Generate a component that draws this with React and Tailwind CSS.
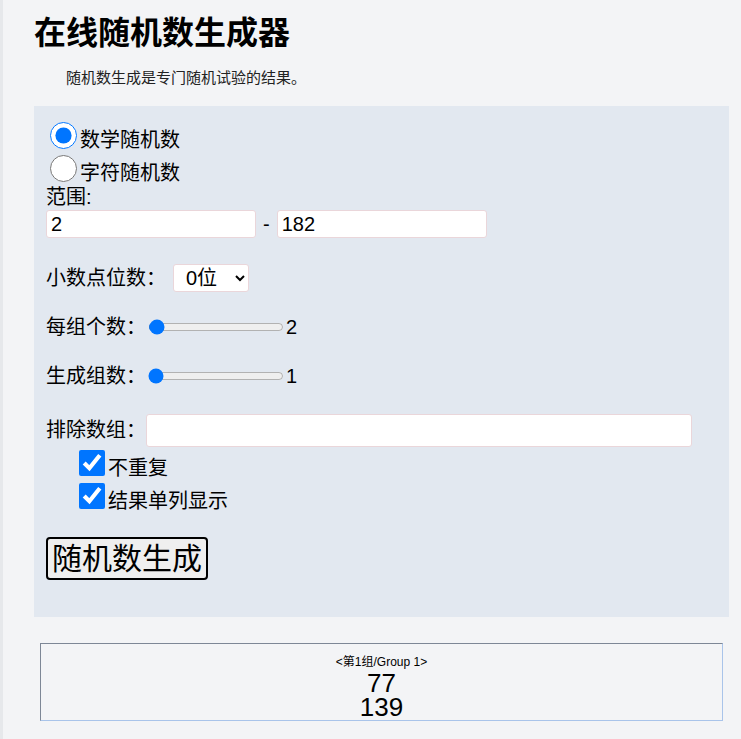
import { useState } from "react";

/* ================= COMPONENT ================= */

export default function App() {
  const [mode, setMode] = useState("math");
  const [min, setMin] = useState("2");
  const [max, setMax] = useState("182");
  const [perGroup, setPerGroup] = useState(2);
  const [groups, setGroups] = useState(1);
  const [noRepeat, setNoRepeat] = useState(true);
  const [singleCol, setSingleCol] = useState(true);

  const font = { fontFamily: '"Liberation Sans", "Noto Sans CJK SC", sans-serif' };

  return (
    <div
      className="min-h-[739px] bg-[#f3f4f6] border-l-[3px] border-[#e6e8eb] pl-[31px] pr-[12px] text-black"
      style={font}
    >
      {/* ================= HEADER ================= */}
      <h1 className="text-[32px] font-bold leading-[38px] pt-[14px]">在线随机数生成器</h1>
      <p className="text-[15px] leading-[20px] pl-[32px] mt-[16px] text-[#222]">
        随机数生成是专门随机试验的结果。
      </p>

      {/* ================= FORM PANEL ================= */}
      <div className="mt-[18px] bg-[#e2e8f0] w-[695px] pl-[12px] pt-[13px] pb-[37px] text-[20px] leading-[24px]">
        <label className="flex items-end h-[33px]">
          <input
            type="radio"
            name="mode"
            checked={mode === "math"}
            onChange={() => setMode("math")}
            className="w-[27px] h-[27px] ml-[4px] mr-[3px] mb-[3px] accent-[#0075ff]"
          />
          <span>数学随机数</span>
        </label>
        <label className="flex items-end h-[33px]">
          <input
            type="radio"
            name="mode"
            checked={mode === "char"}
            onChange={() => setMode("char")}
            className="w-[27px] h-[27px] ml-[4px] mr-[3px] mb-[3px] accent-[#0075ff]"
          />
          <span>字符随机数</span>
        </label>
        <div className="leading-[24px]">范围:</div>
        <div className="flex items-center h-[30px]">
          <input
            value={min}
            onChange={(e) => setMin(e.target.value)}
            className="w-[210px] h-[28px] bg-white border border-[#ead6da] rounded-[3px] px-[4px] text-[20px]"
          />
          <span className="mx-[7px]">-</span>
          <input
            value={max}
            onChange={(e) => setMax(e.target.value)}
            className="w-[210px] h-[28px] bg-white border border-[#ead6da] rounded-[3px] px-[4px] text-[20px]"
          />
        </div>

        <div className="flex items-center h-[30px] mt-[24px]">
          <span>小数点位数：</span>
          <select className="ml-[7px] w-[76px] h-[28px] bg-white border border-[#ead6da] rounded-[3px] pl-[8px] text-[20px]">
            <option>0位</option>
            <option>1位</option>
            <option>2位</option>
          </select>
        </div>

        <div className="flex items-center h-[30px] mt-[19px]">
          <span>每组个数：</span>
          <input
            type="range"
            min="1"
            max="100"
            value={perGroup}
            onChange={(e) => setPerGroup(Number(e.target.value))}
            className="w-[136px] ml-[2px] accent-[#0075ff]"
          />
          <span className="ml-[2px]">{perGroup}</span>
        </div>

        <div className="flex items-center h-[30px] mt-[19px]">
          <span>生成组数：</span>
          <input
            type="range"
            min="1"
            max="100"
            value={groups}
            onChange={(e) => setGroups(Number(e.target.value))}
            className="w-[136px] ml-[2px] accent-[#0075ff]"
          />
          <span className="ml-[2px]">{groups}</span>
        </div>

        <div className="flex items-center h-[34px] mt-[22px]">
          <span>排除数组：</span>
          <input className="ml-[0px] w-[546px] h-[33px] bg-white border border-[#ead6da] rounded-[3px] px-[4px] text-[20px]" />
        </div>

        <label className="flex items-end h-[33px] pl-[33px]">
          <input
            type="checkbox"
            checked={noRepeat}
            onChange={(e) => setNoRepeat(e.target.checked)}
            className="w-[26px] h-[26px] mr-[3px] mb-[4px] accent-[#0075ff]"
          />
          <span>不重复</span>
        </label>
        <label className="flex items-end h-[33px] pl-[33px]">
          <input
            type="checkbox"
            checked={singleCol}
            onChange={(e) => setSingleCol(e.target.checked)}
            className="w-[26px] h-[26px] mr-[3px] mb-[4px] accent-[#0075ff]"
          />
          <span>结果单列显示</span>
        </label>

        <button className="mt-[24px] border-2 border-black rounded-[4px] bg-[#efefef] text-[30px] leading-[35px] px-[4px] py-[2px]">
          随机数生成
        </button>
      </div>

      {/* ================= RESULT ================= */}
      <div className="mt-[26px] ml-[6px] w-[683px] h-[78px] border border-t-[#7d8796] border-l-[#7d8796] border-r-[#a9c4ea] border-b-[#a9c4ea] text-center pt-[9px]">
        <div className="text-[12px] leading-[18px]">&lt;第1组/Group 1&gt;</div>
        <div className="text-[26px] leading-[24px]">77</div>
        <div className="text-[26px] leading-[24px]">139</div>
      </div>
    </div>
  );
}
